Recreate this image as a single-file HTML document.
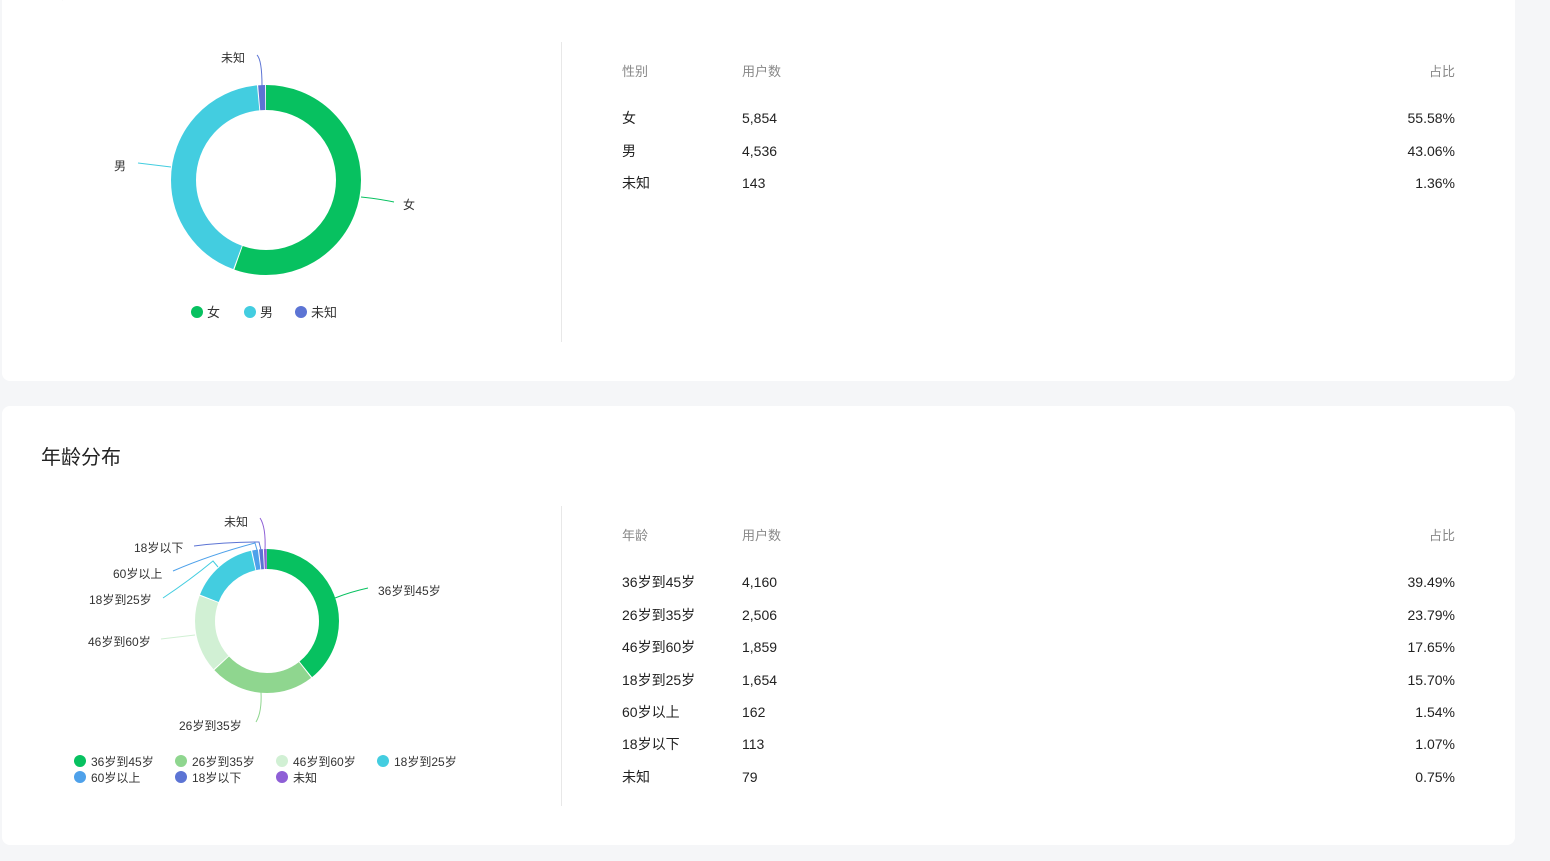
<!DOCTYPE html>
<html><head><meta charset="utf-8">
<style>
*{margin:0;padding:0;box-sizing:border-box}
body{width:1550px;height:861px;background:#f5f6f8;font-family:"Liberation Sans","Noto Sans CJK SC",sans-serif;position:relative;overflow:hidden;color:#222}
.card{position:absolute;left:2px;width:1513px;background:#fff;border-radius:8px}
.t{position:absolute;font-size:14px;line-height:16px;white-space:nowrap}
.h{color:#888;font-size:13px}
.r{text-align:right}
.vl{position:absolute;left:561px;width:1px;background:#e8e8e8}
.title{position:absolute;left:41px;font-size:20px;color:#222}
svg{position:absolute;left:0;top:0}
.lab{font-size:12px;fill:#333;font-family:"Liberation Sans","Noto Sans CJK SC",sans-serif}
</style></head><body>
<div class="card" style="top:-10px;height:391px"></div>
<div class="card" style="top:406px;height:439px"></div>
<div class="title" style="top:-25px">性别分布</div>
<div class="title" style="top:441px">年龄分布</div>
<div class="vl" style="top:42px;height:300px"></div>
<div class="vl" style="top:506px;height:300px"></div>

<svg width="560" height="861">
 <g transform="rotate(-90 266 180)" fill="none" stroke-width="25">
  <circle cx="266" cy="180" r="82.5" stroke="#07c160" stroke-dasharray="287.1 600" stroke-dashoffset="0"/>
  <circle cx="266" cy="180" r="82.5" stroke="#43cde0" stroke-dasharray="222.2 600" stroke-dashoffset="-288.1"/>
  <circle cx="266" cy="180" r="82.5" stroke="#5c74d4" stroke-dasharray="6.05 600" stroke-dashoffset="-511.3"/>
 </g>
 <path d="M361 197 Q380 199 394 202" stroke="#07c160" fill="none"/>
 <path d="M171 167 L138 163" stroke="#43cde0" fill="none"/>
 <path d="M262 86 Q262 60 257 55" stroke="#5c74d4" fill="none"/>
 <text class="lab" x="403" y="209">女</text>
 <text class="lab" x="114" y="170">男</text>
 <text class="lab" x="221" y="62">未知</text>
 <circle cx="197" cy="312" r="6" fill="#07c160"/><text x="207" y="317" style="font-size:13px" class="lab">女</text>
 <circle cx="250" cy="312" r="6" fill="#43cde0"/><text x="260" y="317" style="font-size:13px" class="lab">男</text>
 <circle cx="301" cy="312" r="6" fill="#5c74d4"/><text x="311" y="317" style="font-size:13px" class="lab">未知</text>

 <g transform="rotate(-90 267 621)" fill="none" stroke-width="20">
  <circle cx="267" cy="621" r="62" stroke="#07c160" stroke-dasharray="152.8 500" stroke-dashoffset="0"/>
  <circle cx="267" cy="621" r="62" stroke="#8fd68f" stroke-dasharray="91.7 500" stroke-dashoffset="-153.8"/>
  <circle cx="267" cy="621" r="62" stroke="#d1f0d4" stroke-dasharray="67.8 500" stroke-dashoffset="-246.5"/>
  <circle cx="267" cy="621" r="62" stroke="#43cde0" stroke-dasharray="60.2 500" stroke-dashoffset="-315.3"/>
  <circle cx="267" cy="621" r="62" stroke="#4ea1ea" stroke-dasharray="5.0 500" stroke-dashoffset="-376.5"/>
  <circle cx="267" cy="621" r="62" stroke="#5c74d4" stroke-dasharray="3.3 500" stroke-dashoffset="-382.5"/>
  <circle cx="267" cy="621" r="62" stroke="#8e5fd6" stroke-dasharray="2.5 500" stroke-dashoffset="-386.7"/>
 </g>
 <path d="M335 598 Q350 592 368 588" stroke="#07c160" fill="none"/>
 <path d="M261 692 Q262 712 256 722" stroke="#8fd68f" fill="none"/>
 <path d="M195 635 L161 639" stroke="#d1f0d4" fill="none"/>
 <path d="M218 567 L213 561 Q190 580 163 598" stroke="#43cde0" fill="none"/>
 <path d="M257 550 L255 543 Q210 555 173 571" stroke="#4ea1ea" fill="none"/>
 <path d="M261 550 L259 542 Q225 542 194 546" stroke="#5c74d4" fill="none"/>
 <path d="M265 550 Q266 527 260 518" stroke="#8e5fd6" fill="none"/>
 <text class="lab" x="378" y="595">36岁到45岁</text>
 <text class="lab" x="179" y="730">26岁到35岁</text>
 <text class="lab" x="88" y="646">46岁到60岁</text>
 <text class="lab" x="89" y="604">18岁到25岁</text>
 <text class="lab" x="113" y="578">60岁以上</text>
 <text class="lab" x="134" y="552">18岁以下</text>
 <text class="lab" x="224" y="526">未知</text>
 <g class="lab">
  <circle cx="80" cy="761" r="6" fill="#07c160"/><text class="lab" x="91" y="766">36岁到45岁</text>
  <circle cx="181" cy="761" r="6" fill="#8fd68f"/><text class="lab" x="192" y="766">26岁到35岁</text>
  <circle cx="282" cy="761" r="6" fill="#d1f0d4"/><text class="lab" x="293" y="766">46岁到60岁</text>
  <circle cx="383" cy="761" r="6" fill="#43cde0"/><text class="lab" x="394" y="766">18岁到25岁</text>
  <circle cx="80" cy="777" r="6" fill="#4ea1ea"/><text class="lab" x="91" y="782">60岁以上</text>
  <circle cx="181" cy="777" r="6" fill="#5c74d4"/><text class="lab" x="192" y="782">18岁以下</text>
  <circle cx="282" cy="777" r="6" fill="#8e5fd6"/><text class="lab" x="293" y="782">未知</text>
 </g>
</svg>

<div class="t h" style="left:622px;top:64px">性别</div>
<div class="t h" style="left:742px;top:64px">用户数</div>
<div class="t h r" style="left:1355px;width:100px;top:64px">占比</div>
<div class="t" style="left:622px;top:110px">女</div><div class="t" style="left:742px;top:110px">5,854</div><div class="t r" style="left:1355px;width:100px;top:110px">55.58%</div>
<div class="t" style="left:622px;top:143px">男</div><div class="t" style="left:742px;top:143px">4,536</div><div class="t r" style="left:1355px;width:100px;top:143px">43.06%</div>
<div class="t" style="left:622px;top:175px">未知</div><div class="t" style="left:742px;top:175px">143</div><div class="t r" style="left:1355px;width:100px;top:175px">1.36%</div>

<div class="t h" style="left:622px;top:528px">年龄</div>
<div class="t h" style="left:742px;top:528px">用户数</div>
<div class="t h r" style="left:1355px;width:100px;top:528px">占比</div>
<div class="t" style="left:622px;top:574px">36岁到45岁</div><div class="t" style="left:742px;top:574px">4,160</div><div class="t r" style="left:1355px;width:100px;top:574px">39.49%</div>
<div class="t" style="left:622px;top:607px">26岁到35岁</div><div class="t" style="left:742px;top:607px">2,506</div><div class="t r" style="left:1355px;width:100px;top:607px">23.79%</div>
<div class="t" style="left:622px;top:639px">46岁到60岁</div><div class="t" style="left:742px;top:639px">1,859</div><div class="t r" style="left:1355px;width:100px;top:639px">17.65%</div>
<div class="t" style="left:622px;top:672px">18岁到25岁</div><div class="t" style="left:742px;top:672px">1,654</div><div class="t r" style="left:1355px;width:100px;top:672px">15.70%</div>
<div class="t" style="left:622px;top:704px">60岁以上</div><div class="t" style="left:742px;top:704px">162</div><div class="t r" style="left:1355px;width:100px;top:704px">1.54%</div>
<div class="t" style="left:622px;top:736px">18岁以下</div><div class="t" style="left:742px;top:736px">113</div><div class="t r" style="left:1355px;width:100px;top:736px">1.07%</div>
<div class="t" style="left:622px;top:769px">未知</div><div class="t" style="left:742px;top:769px">79</div><div class="t r" style="left:1355px;width:100px;top:769px">0.75%</div>
</body></html>
